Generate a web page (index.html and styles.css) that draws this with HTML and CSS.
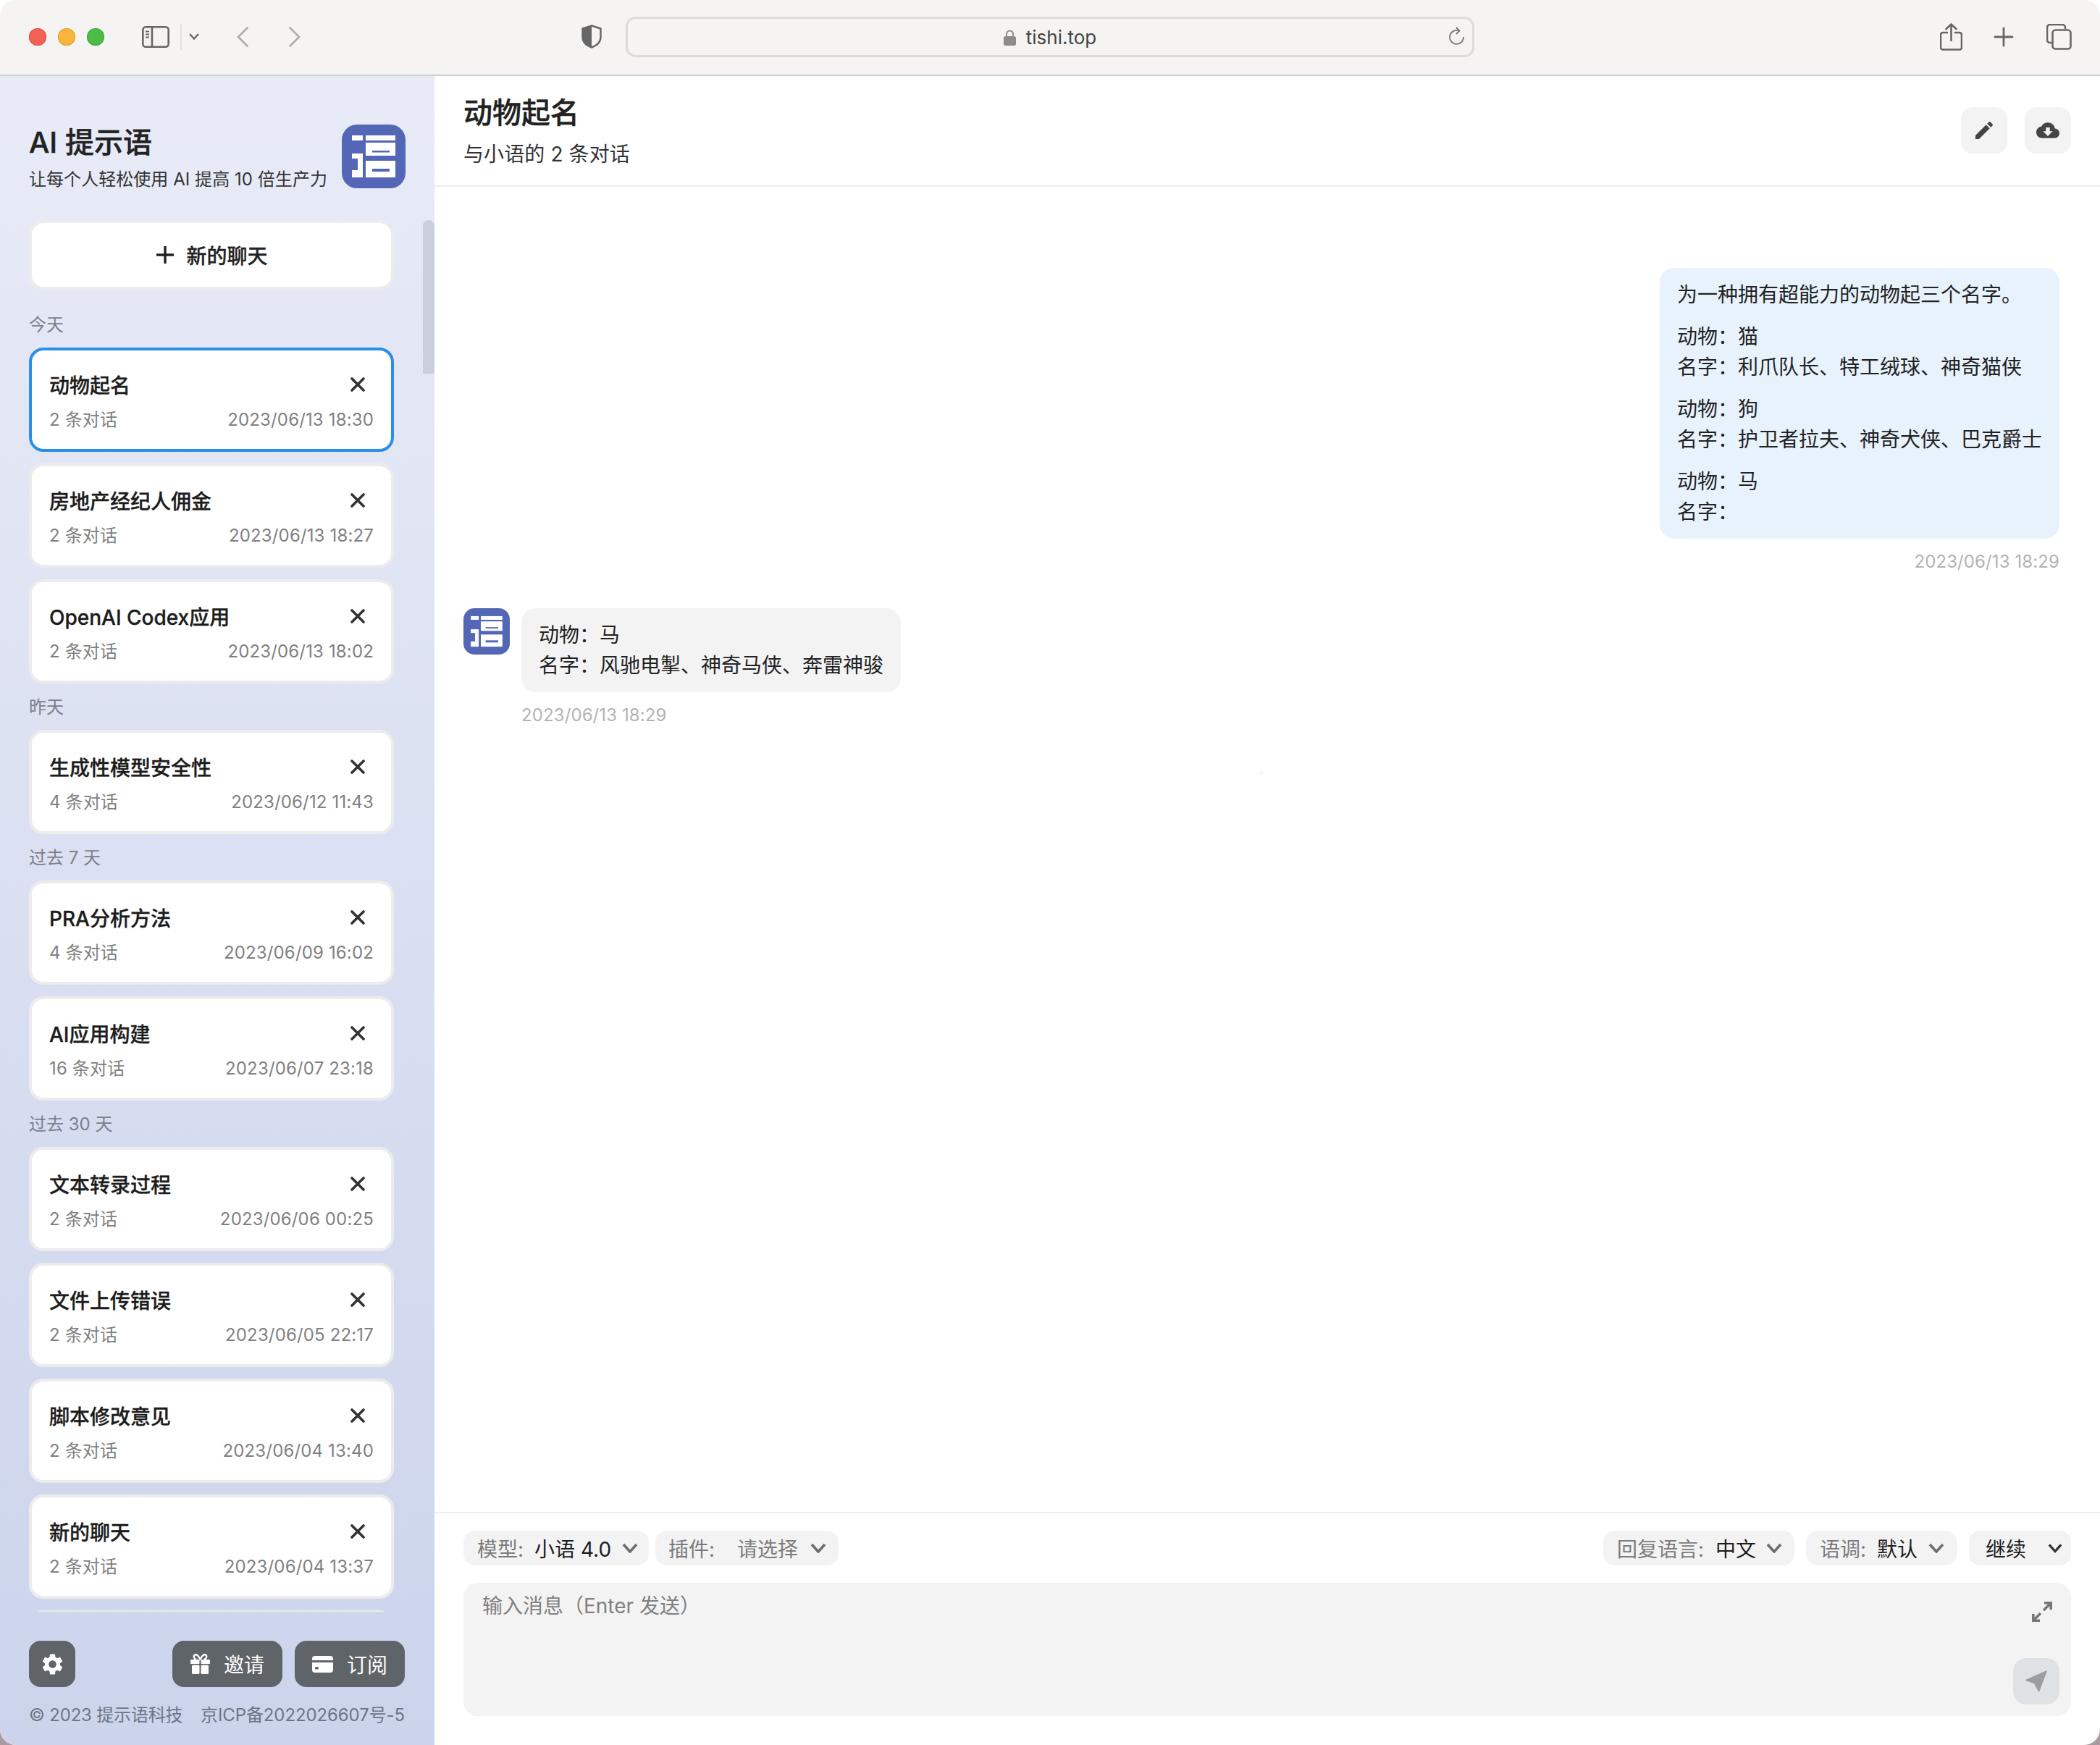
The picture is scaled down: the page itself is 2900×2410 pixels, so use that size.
FILE: index.html
```html
<!DOCTYPE html>
<html lang="zh-CN">
<head>
    <meta charset="UTF-8">
    <title>AI 提示语</title>
    <link rel="stylesheet" href="styles.css">
</head>
<body>

<!--图标-->
<svg class="defs" width="0" height="0">
    <symbol id="logo" viewBox="0 0 88 88">
        <rect width="88" height="88" rx="21" fill="#5367b6"/>
        <g fill="#fff">
            <rect x="14" y="15" width="15" height="7"/>
            <rect x="33" y="15" width="41" height="7"/>
            <rect x="33" y="25" width="41" height="18"/>
            <rect x="33" y="50" width="41" height="23"/>
            <rect x="14" y="40" width="15" height="7"/>
            <rect x="22" y="47" width="7" height="16"/>
            <rect x="14" y="63" width="15" height="10"/>
        </g>
        <g fill="#5367b6">
            <rect x="42" y="36" width="24" height="2.5"/>
            <rect x="42" y="61" width="24" height="4"/>
        </g>
    </symbol>
    <symbol id="close" viewBox="0 0 20 20">
        <path d="M2 2L18 18M18 2L2 18" fill="none" stroke="#333" stroke-width="3.6" stroke-linecap="round"/>
    </symbol>
    <symbol id="chevron" viewBox="0 0 22 14">
        <path d="M2 2L11 12L20 2" fill="none" stroke="currentColor" stroke-width="3.6"/>
    </symbol>
</svg>

<div class="window">

    <!--浏览器工具栏-->
    <div class="toolbar">
        <div class="lights">
            <span class="light light-red"></span>
            <span class="light light-yellow"></span>
            <span class="light light-green"></span>
        </div>
        <svg class="tb-sidebar" width="38" height="30" viewBox="0 0 38 30" fill="none" stroke="#666" stroke-width="2.6">
            <rect x="1.3" y="1.3" width="35.4" height="27.4" rx="4"/>
            <path d="M14 1.3V28.7"/>
            <path d="M5 7.5H10M5 11.5H10M5 15.5H10" stroke-width="2"/>
        </svg>
        <span class="tb-divider"></span>
        <svg class="tb-more" width="14" height="9" viewBox="0 0 14 9" fill="none" stroke="#666" stroke-width="2.4"><path d="M1 1L7 7.5L13 1"/></svg>
        <svg class="tb-back" width="16" height="28" viewBox="0 0 16 28" fill="none" stroke="#acacac" stroke-width="2.6" stroke-linecap="round"><path d="M14.5 1.5L2 14L14.5 26.5"/></svg>
        <svg class="tb-forward" width="16" height="28" viewBox="0 0 16 28" fill="none" stroke="#acacac" stroke-width="2.6" stroke-linecap="round"><path d="M1.5 1.5L14 14L1.5 26.5"/></svg>
        <svg class="tb-shield" width="28" height="33" viewBox="0 0 28 33">
            <path d="M14 1.5L26.5 5.5V17C26.5 24 21 29 14 31.5C7 29 1.5 24 1.5 17V5.5Z" fill="none" stroke="#666" stroke-width="2.4"/>
            <path d="M14 1.5V31.5C7 29 1.5 24 1.5 17V5.5Z" fill="#666"/>
        </svg>
        <div class="address">
            <svg width="17" height="22" viewBox="0 0 17 22"><path d="M4 9V6a4.5 4.5 0 0 1 9 0V9" fill="none" stroke="#8c8c8c" stroke-width="2"/><rect y="9" width="17" height="13" rx="2.5" fill="#8c8c8c"/></svg>
            <span>tishi.top</span>
            <svg class="reload" width="22" height="26" viewBox="0 0 22 26" fill="none" stroke="#777" stroke-width="1.8"><path d="M14 5.5A9.5 9.5 0 1 0 20 14"/><path d="M10 1L14.5 5.5L10 10"/></svg>
        </div>
        <svg class="tb-share" width="31" height="38" viewBox="0 0 31 38" fill="none" stroke="#666" stroke-width="2.6" stroke-linecap="round">
            <path d="M10 13H4a3 3 0 0 0-3 3V33.500a3 3 0 0 0 3 3H27a3 3 0 0 0 3-3V16a3 3 0 0 0-3-3H21"/>
            <path d="M15.500 24V2M8.500 8L15.500 1.500L22.500 8"/>
        </svg>
        <svg class="tb-plus" width="28" height="28" viewBox="0 0 28 28" stroke="#666" stroke-width="2.8" stroke-linecap="round"><path d="M14 2V26M2 14H26"/></svg>
        <svg class="tb-tabs" width="35" height="36" viewBox="0 0 35 36" fill="none" stroke="#666" stroke-width="2.6">
            <path d="M7 26H5a4 4 0 0 1-4-4V5a4 4 0 0 1 4-4H22a4 4 0 0 1 4 4V7"/>
            <rect x="8.500" y="8.500" width="25" height="26" rx="4"/>
        </svg>
    </div>

    <div class="app">

        <!--侧边栏-->
        <div class="sidebar">
            <div class="brand">
                <div class="brand-text">
                    <div class="brand-title">AI 提示语</div>
                    <div class="brand-sub">让每个人轻松使用 AI 提高 10 倍生产力</div>
                </div>
                <svg class="brand-logo" width="88" height="88"><use href="#logo"/></svg>
            </div>

            <div class="scroll-thumb"></div>

            <div class="new-chat">
                <svg width="24" height="24" viewBox="0 0 24 24" stroke="#222" stroke-width="3.4"><path d="M12 0V24M0 12H24"/></svg>
                <span>新的聊天</span>
            </div>

            <div class="chat-list">
                <div class="group-label">今天</div>
                <div class="chat-card active">
                    <div class="chat-row"><span class="chat-title">动物起名</span><svg class="chat-close" width="20" height="20"><use href="#close"/></svg></div>
                    <div class="chat-meta"><span>2 条对话</span><span>2023/06/13 18:30</span></div>
                </div>
                <div class="chat-card">
                    <div class="chat-row"><span class="chat-title">房地产经纪人佣金</span><svg class="chat-close" width="20" height="20"><use href="#close"/></svg></div>
                    <div class="chat-meta"><span>2 条对话</span><span>2023/06/13 18:27</span></div>
                </div>
                <div class="chat-card">
                    <div class="chat-row"><span class="chat-title">OpenAI Codex应用</span><svg class="chat-close" width="20" height="20"><use href="#close"/></svg></div>
                    <div class="chat-meta"><span>2 条对话</span><span>2023/06/13 18:02</span></div>
                </div>

                <div class="group-label">昨天</div>
                <div class="chat-card">
                    <div class="chat-row"><span class="chat-title">生成性模型安全性</span><svg class="chat-close" width="20" height="20"><use href="#close"/></svg></div>
                    <div class="chat-meta"><span>4 条对话</span><span>2023/06/12 11:43</span></div>
                </div>

                <div class="group-label">过去 7 天</div>
                <div class="chat-card">
                    <div class="chat-row"><span class="chat-title">PRA分析方法</span><svg class="chat-close" width="20" height="20"><use href="#close"/></svg></div>
                    <div class="chat-meta"><span>4 条对话</span><span>2023/06/09 16:02</span></div>
                </div>
                <div class="chat-card">
                    <div class="chat-row"><span class="chat-title">AI应用构建</span><svg class="chat-close" width="20" height="20"><use href="#close"/></svg></div>
                    <div class="chat-meta"><span>16 条对话</span><span>2023/06/07 23:18</span></div>
                </div>

                <div class="group-label">过去 30 天</div>
                <div class="chat-card">
                    <div class="chat-row"><span class="chat-title">文本转录过程</span><svg class="chat-close" width="20" height="20"><use href="#close"/></svg></div>
                    <div class="chat-meta"><span>2 条对话</span><span>2023/06/06 00:25</span></div>
                </div>
                <div class="chat-card">
                    <div class="chat-row"><span class="chat-title">文件上传错误</span><svg class="chat-close" width="20" height="20"><use href="#close"/></svg></div>
                    <div class="chat-meta"><span>2 条对话</span><span>2023/06/05 22:17</span></div>
                </div>
                <div class="chat-card">
                    <div class="chat-row"><span class="chat-title">脚本修改意见</span><svg class="chat-close" width="20" height="20"><use href="#close"/></svg></div>
                    <div class="chat-meta"><span>2 条对话</span><span>2023/06/04 13:40</span></div>
                </div>
                <div class="chat-card">
                    <div class="chat-row"><span class="chat-title">新的聊天</span><svg class="chat-close" width="20" height="20"><use href="#close"/></svg></div>
                    <div class="chat-meta"><span>2 条对话</span><span>2023/06/04 13:37</span></div>
                </div>
                <div class="chat-card"></div>
            </div>

            <div class="side-actions">
                <div class="dark-btn dark-btn-icon">
                    <svg width="35" height="35" viewBox="0 0 24 24" fill="#fff"><path d="M19.14 12.94c.04-.3.06-.61.06-.94 0-.32-.02-.64-.07-.94l2.03-1.58c.18-.14.23-.41.12-.61l-1.92-3.32c-.12-.22-.37-.29-.59-.22l-2.39.96c-.5-.38-1.03-.7-1.62-.94l-.36-2.54c-.04-.24-.24-.41-.48-.41h-3.84c-.24 0-.43.17-.47.41l-.36 2.54c-.59.24-1.13.57-1.62.94l-2.39-.96c-.22-.08-.47 0-.59.22L2.74 8.87c-.12.21-.08.47.12.61l2.03 1.58c-.05.3-.09.63-.09.94s.02.64.07.94l-2.03 1.58c-.18.14-.23.41-.12.61l1.92 3.32c.12.22.37.29.59.22l2.39-.96c.5.38 1.03.7 1.62.94l.36 2.54c.05.24.24.41.48.41h3.84c.24 0 .44-.17.47-.41l.36-2.54c.59-.24 1.13-.56 1.62-.94l2.39.96c.22.08.47 0 .59-.22l1.92-3.32c.12-.22.07-.47-.12-.61l-2.01-1.58zM12 15.6c-1.98 0-3.6-1.62-3.6-3.6s1.62-3.6 3.6-3.6 3.6 1.620 3.600 3.600-1.620 3.600-3.600 3.600z"/></svg>
                </div>
                <div class="dark-btn dark-btn-first">
                    <svg width="27" height="28" viewBox="0 0 27 28">
                        <path d="M13.500 8C11 2 8 0.500 6 1.500C4 2.500 4.500 7 8 8M13.500 8C16 2 19 0.500 21 1.500C23 2.500 22.500 7 19 8" fill="none" stroke="#fff" stroke-width="2.400"/>
                        <rect y="8" width="12.500" height="6" rx="1" fill="#fff"/>
                        <rect x="14.500" y="8" width="12.500" height="6" rx="1" fill="#fff"/>
                        <rect x="2" y="15.500" width="10.500" height="12.500" rx="1.500" fill="#fff"/>
                        <rect x="14.500" y="15.500" width="10.500" height="12.500" rx="1.500" fill="#fff"/>
                    </svg>
                    <span>邀请</span>
                </div>
                <div class="dark-btn">
                    <svg width="29" height="23" viewBox="0 0 29 23">
                        <path d="M4 0H25a4 4 0 0 1 4 4V6H0V4A4 4 0 0 1 4 0Z" fill="#fff"/>
                        <path d="M0 9H29V19a4 4 0 0 1-4 4H4a4 4 0 0 1-4-4Z" fill="#fff"/>
                        <rect x="4" y="15" width="5" height="3.500" rx="1.500" fill="#5f6468"/>
                    </svg>
                    <span>订阅</span>
                </div>
            </div>
            <div class="copyright">
                <span class="copy-company">© 2023 提示语科技</span>
                <span class="copy-icp">京ICP备2022026607号-5</span>
            </div>
        </div>

        <!--聊天区域-->
        <div class="main">
            <div class="main-head">
                <div>
                    <div class="main-title">动物起名</div>
                    <div class="main-sub">与小语的 2 条对话</div>
                </div>
                <div class="head-btns">
                    <div class="head-btn">
                        <svg width="32" height="32" viewBox="0 0 24 24" fill="#444"><path d="M3 17.250V21h3.750L17.810 9.940l-3.750-3.750L3 17.250zM20.710 7.040c.39-.39.39-1.020 0-1.410l-2.340-2.340c-.39-.39-1.020-.39-1.410 0l-1.830 1.830 3.750 3.750 1.830-1.830z"/></svg>
                    </div>
                    <div class="head-btn">
                        <svg width="32" height="32" viewBox="0 0 24 24" fill="#444"><path d="M19.350 10.040C18.670 6.590 15.640 4 12 4 9.110 4 6.600 5.640 5.350 8.040 2.340 8.360 0 10.910 0 14c0 3.310 2.690 6 6 6h13c2.760 0 5-2.240 5-5 0-2.640-2.050-4.780-4.650-4.960zM17 13l-5 5-5-5h3V9h4v4h3z"/></svg>
                    </div>
                </div>
            </div>

            <div class="messages">
                <div class="msg-user">
                    <div class="bubble bubble-user">
                        <p>为一种拥有超能力的动物起三个名字。</p>
                        <p>动物<span class="colon">：</span>猫<br>名字<span class="colon">：</span>利爪队长、特工绒球、神奇猫侠</p>
                        <p>动物<span class="colon">：</span>狗<br>名字<span class="colon">：</span>护卫者拉夫、神奇犬侠、巴克爵士</p>
                        <p>动物<span class="colon">：</span>马<br>名字<span class="colon">：</span></p>
                    </div>
                    <div class="msg-time">2023/06/13 18:29</div>
                </div>
                <div class="msg-bot">
                    <svg class="msg-avatar" width="64" height="64"><use href="#logo"/></svg>
                    <div>
                        <div class="bubble">
                            <p>动物<span class="colon">：</span>马<br>名字<span class="colon">：</span>风驰电掣、神奇马侠、奔雷神骏</p>
                        </div>
                        <div class="msg-time">2023/06/13 18:29</div>
                    </div>
                </div>
                <span class="speck"></span>
            </div>

            <div class="composer">
                <div class="pills">
                    <div class="pill pill-model"><span class="pill-label">模型:</span><span class="pill-value">小语 4.0</span><svg class="pill-arrow" width="22" height="14"><use href="#chevron"/></svg></div>
                    <div class="pill pill-plugin"><span class="pill-label">插件:</span><span class="pill-value pill-muted">请选择</span><svg class="pill-arrow" width="22" height="14"><use href="#chevron"/></svg></div>
                    <div class="pill pill-lang"><span class="pill-label">回复语言:</span><span class="pill-value">中文</span><svg class="pill-arrow" width="22" height="14"><use href="#chevron"/></svg></div>
                    <div class="pill pill-tone"><span class="pill-label">语调:</span><span class="pill-value">默认</span><svg class="pill-arrow" width="22" height="14"><use href="#chevron"/></svg></div>
                    <div class="pill pill-continue"><span class="pill-value">继续</span><svg class="pill-arrow pill-arrow-dark" width="20" height="14"><use href="#chevron"/></svg></div>
                </div>
                <div class="input-box">
                    <div class="placeholder">输入消息（Enter 发送）</div>
                    <svg class="expand" width="28" height="28" viewBox="0 0 28 28" fill="none" stroke="#777" stroke-width="3.600">
                        <path d="M16 12L26 2M17 1.800H26.200V11"/>
                        <path d="M12 16L2 26M11 26.200H1.800V17"/>
                    </svg>
                    <div class="send-btn">
                        <svg width="30" height="30" viewBox="0 0 30 30"><path d="M29 1L1 13.500L12.500 17.500L18.500 29Z" fill="#999ea2" stroke="#999ea2" stroke-width="1.500" stroke-linejoin="round"/></svg>
                    </div>
                </div>
            </div>
        </div>
    </div>
</div>

</body>
</html>
```

FILE: styles.css
```css
* {
    margin: 0;
    padding: 0;
    box-sizing: border-box;
}

body {
    width: 2900px;
    height: 2410px;
    overflow: hidden;
    background: linear-gradient(#ffffff, #ffffff 50%, #a89aa0);
    font-family: "Inter", "Noto Sans CJK SC", sans-serif;
    color: #222;
}

.defs {
    position: absolute;
}

.window {
    width: 2900px;
    height: 2410px;
    display: flex;
    flex-direction: column;
    border-radius: 22px;
    overflow: hidden;
    background-color: #fff;
}

/*浏览器工具栏*/
.toolbar {
    height: 105px;
    flex: none;
    display: flex;
    align-items: center;
    padding: 0 39px 2px 40px;
    background-color: #f5f4f2;
    border-bottom: 2px solid #cfd0d3;
}

.lights {
    display: flex;
    gap: 16px;
}

.light {
    width: 24px;
    height: 24px;
    border-radius: 50%;
}

.light-red {
    background-color: #f46157;
    box-shadow: inset 0 0 0 1px #e0483e;
}

.light-yellow {
    background-color: #fcb53c;
    box-shadow: inset 0 0 0 1px #e09c28;
}

.light-green {
    background-color: #4dbc46;
    box-shadow: inset 0 0 0 1px #3da837;
}

.tb-sidebar {
    margin-left: 52px;
}

.tb-divider {
    width: 2px;
    height: 36px;
    margin-left: 15px;
    background-color: #e3e2e0;
}

.tb-more {
    margin-left: 10px;
}

.tb-back {
    margin-left: 52px;
}

.tb-forward {
    margin-left: 56px;
}

.tb-shield {
    margin-left: 388px;
}

.address {
    width: 1172px;
    height: 56px;
    margin-left: 33px;
    padding-top: 2px;
    display: flex;
    align-items: center;
    justify-content: center;
    gap: 14px;
    position: relative;
    font-size: 26px;
    color: #444;
    background-color: #f5f4f2;
    border: 3px solid #dcdbd9;
    border-radius: 14px;
}

.reload {
    position: absolute;
    right: 10px;
    top: 11px;
}

.tb-share {
    margin-left: auto;
}

.tb-plus {
    margin-left: 43px;
}

.tb-tabs {
    margin-left: 45px;
}

.app {
    flex: 1;
    display: flex;
    min-height: 0;
}

/*侧边栏*/
.sidebar {
    width: 600px;
    flex: none;
    display: flex;
    flex-direction: column;
    padding: 0 40px;
    position: relative;
    background: linear-gradient(#e8ebf7, #ccd4ec);
}

.brand {
    height: 199px;
    flex: none;
    display: flex;
    justify-content: space-between;
    padding-top: 64px;
}

.brand-title {
    font-size: 40px;
    line-height: 56px;
    font-weight: 500;
    -webkit-text-stroke: 0.4px #222;
}

.brand-sub {
    margin-top: 7px;
    font-size: 24px;
    line-height: 32px;
    letter-spacing: 0.05px;
    color: #333;
    white-space: nowrap;
}

.brand-logo {
    margin-top: 3px;
}

.scroll-thumb {
    position: absolute;
    right: 0;
    top: 199px;
    width: 16px;
    height: 212px;
    background-color: #c9cfdd;
    border-radius: 8px 8px 0 0;
}

.new-chat {
    width: 504px;
    height: 96px;
    flex: none;
    display: flex;
    align-items: center;
    justify-content: center;
    gap: 17px;
    padding-left: 2px;
    font-size: 28px;
    font-weight: 500;
    -webkit-text-stroke: 0.3px #222;
    background-color: #fff;
    border: 4px solid #ececec;
    border-radius: 20px;
}

.chat-list {
    flex: 1;
    min-height: 0;
    width: 504px;
    overflow: hidden;
    padding-top: 32px;
}

.group-label {
    height: 30px;
    line-height: 33px;
    margin-bottom: 18px;
    font-size: 24px;
    color: #7a7f8a;
}

.chat-card {
    height: 144px;
    margin-bottom: 16px;
    padding: 27px 24px 0;
    background-color: #fff;
    border: 4px solid #ececec;
    border-radius: 20px;
}

.chat-card.active {
    border-color: #2b8ee8;
}

.chat-row {
    display: flex;
    align-items: center;
    justify-content: space-between;
    height: 40px;
}

.chat-title {
    font-size: 28px;
    font-weight: 500;
    -webkit-text-stroke: 0.3px #1c1c1c;
    color: #1c1c1c;
}

.chat-close {
    margin-right: 12px;
}

.chat-meta {
    display: flex;
    justify-content: space-between;
    margin-top: 11px;
    font-size: 24px;
    line-height: 36px;
    letter-spacing: 0.15px;
    color: #808080;
}

.side-actions {
    flex: none;
    display: flex;
    gap: 17px;
    margin-top: 40px;
    width: 519px;
}

.dark-btn {
    width: 152px;
    height: 64px;
    display: flex;
    align-items: center;
    justify-content: center;
    gap: 19px;
    font-size: 28px;
    color: #fff;
    background-color: #5f6468;
    border-radius: 16px;
}

.dark-btn-icon {
    width: 64px;
}

.dark-btn-first {
    margin-left: auto;
}

.copyright {
    flex: none;
    display: flex;
    justify-content: space-between;
    width: 519px;
    margin: 20px 0 22px;
    font-size: 24px;
    line-height: 38px;
    color: #6e7484;
    white-space: nowrap;
}

.copy-company {
    letter-spacing: -0.2px;
}

.copy-icp {
    letter-spacing: -0.1px;
}

/*聊天区域*/
.main {
    flex: 1;
    min-width: 0;
    display: flex;
    flex-direction: column;
}

.main-head {
    flex: none;
    height: 153px;
    display: flex;
    justify-content: space-between;
    align-items: center;
    padding: 0 40px;
    border-bottom: 2px solid #eeeeef;
}

.main-title {
    font-size: 40px;
    line-height: 56px;
    font-weight: 500;
    -webkit-text-stroke: 0.4px #222;
}

.main-sub {
    margin-top: 9px;
    font-size: 28px;
    line-height: 40px;
    letter-spacing: 0.1px;
    color: #333;
}

.head-btns {
    display: flex;
    gap: 24px;
    margin-bottom: 2px;
}

.head-btn {
    width: 64px;
    height: 64px;
    display: flex;
    align-items: center;
    justify-content: center;
    background-color: #f3f3f3;
    border-radius: 16px;
}

.messages {
    flex: 1;
    position: relative;
    padding: 112px 56px 0 40px;
}

.speck {
    position: absolute;
    left: 1141px;
    top: 809px;
    width: 2px;
    height: 2px;
    background-color: #ddd;
}

.bubble {
    padding: 16px 24px;
    font-size: 28px;
    line-height: 42px;
    background-color: #f3f3f3;
    border-radius: 20px;
    white-space: nowrap;
    width: fit-content;
}

.bubble p + p {
    margin-top: 16px;
}

/*居中的冒号,行高设为0以免撑高行*/
.colon {
    font-family: "Noto Sans CJK TC", sans-serif;
    line-height: 0;
}

.bubble-user {
    background-color: #e7f2fd;
}

.msg-user {
    display: flex;
    flex-direction: column;
    align-items: flex-end;
    margin-bottom: 49px;
}

.msg-bot {
    display: flex;
    gap: 16px;
}

.msg-avatar {
    flex: none;
}

.msg-time {
    margin-top: 17px;
    font-size: 24px;
    line-height: 30px;
    letter-spacing: 0.1px;
    color: #b3b3b3;
}

.composer {
    flex: none;
    padding: 24px 40px 40px;
    border-top: 2px solid #eeeeef;
}

.pills {
    display: flex;
    height: 48px;
    margin-bottom: 24px;
}

.pill {
    display: flex;
    align-items: center;
    font-size: 28px;
    background-color: #f3f3f3;
    border-radius: 16px;
    white-space: nowrap;
}

.pill-label {
    color: #7c7c7c;
}

.pill-value {
    color: #1c1c1c;
}

.pill-muted {
    color: #7c7c7c;
}

.pill-arrow {
    margin-left: auto;
    color: #6e6e6e;
}

.pill-arrow-dark {
    color: #333;
}

.pill-model {
    width: 256px;
    padding: 0 15px 0 19px;
}

.pill-model .pill-label {
    width: 79px;
}

.pill-plugin {
    width: 253px;
    margin-left: 9px;
    padding: 0 17px 0 18px;
}

.pill-plugin .pill-label {
    width: 95px;
}

.pill-lang {
    width: 264px;
    margin-left: auto;
    padding: 0 17px 0 19px;
}

.pill-lang .pill-label {
    width: 136px;
}

.pill-tone {
    width: 209px;
    margin-left: 16px;
    padding: 0 18px 0 19px;
}

.pill-tone .pill-label {
    width: 79px;
}

.pill-continue {
    width: 141px;
    margin-left: 16px;
    padding: 0 12px 0 23px;
}

.input-box {
    height: 184px;
    position: relative;
    padding: 14px 26px;
    background-color: #f3f3f3;
    border-radius: 20px;
}

.placeholder {
    font-size: 28px;
    line-height: 36px;
    color: #808080;
}

.expand {
    position: absolute;
    right: 26px;
    top: 26px;
}

.send-btn {
    position: absolute;
    right: 16px;
    bottom: 16px;
    width: 64px;
    height: 64px;
    display: flex;
    align-items: center;
    justify-content: center;
    background-color: #dfe2e5;
    border-radius: 18px;
}
```
